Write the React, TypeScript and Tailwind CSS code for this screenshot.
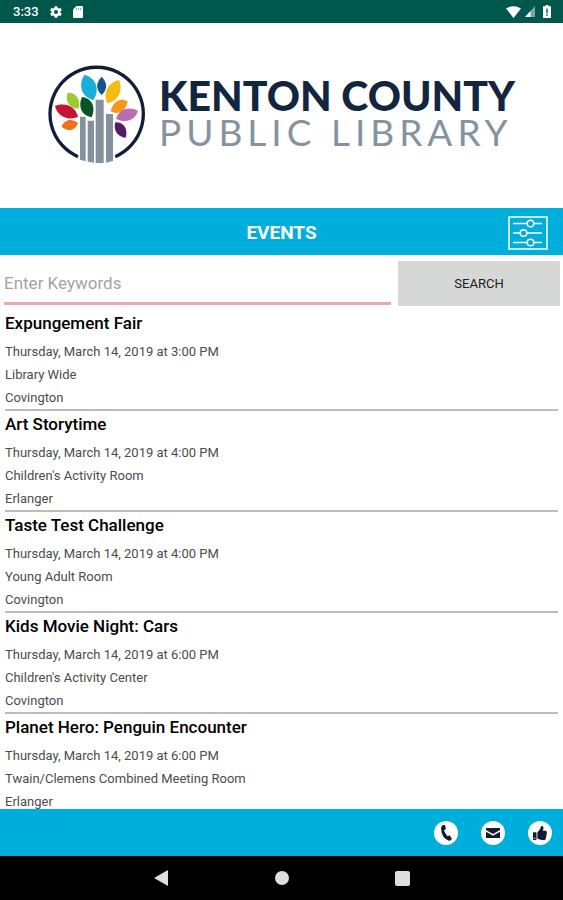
import React from "react";
import { FaThumbsUp } from "react-icons/fa";

type LibraryEvent = { title: string; when: string; room: string; branch: string };

const events: LibraryEvent[] = [
  { title: "Expungement Fair", when: "Thursday, March 14, 2019 at 3:00 PM", room: "Library Wide", branch: "Covington" },
  { title: "Art Storytime", when: "Thursday, March 14, 2019 at 4:00 PM", room: "Children's Activity Room", branch: "Erlanger" },
  { title: "Taste Test Challenge", when: "Thursday, March 14, 2019 at 4:00 PM", room: "Young Adult Room", branch: "Covington" },
  { title: "Kids Movie Night: Cars", when: "Thursday, March 14, 2019 at 6:00 PM", room: "Children's Activity Center", branch: "Covington" },
  { title: "Planet Hero: Penguin Encounter", when: "Thursday, March 14, 2019 at 6:00 PM", room: "Twain/Clemens Combined Meeting Room", branch: "Erlanger" },
];

function StatusBar() {
  return (
    <div className="flex h-[23px] shrink-0 items-center justify-between bg-[#00574b] pr-3 pl-[13px] text-white">
      <div className="flex items-center gap-[10px]">
        <span className="text-[13px] leading-4 font-medium">3:33</span>
        <svg className="h-[14px] w-[14px]" viewBox="0 0 24 24" fill="currentColor" aria-hidden="true">
          <path d="M19.4 13a7.5 7.5 0 0 0 0-2l2.1-1.7a.5.5 0 0 0 .1-.6l-2-3.500a.5.5 0 0 0-.6-.2l-2.500 1a7.300 7.300 0 0 0-1.700-1l-.4-2.600a.5.5 0 0 0-.5-.4h-4a.5.5 0 0 0-.5.4L9 5a7.300 7.300 0 0 0-1.700 1l-2.500-1a.5.5 0 0 0-.6.2l-2 3.500a.5.5 0 0 0 .1.6L4.500 11a7.500 7.500 0 0 0 0 2l-2.200 1.700a.5.5 0 0 0-.1.6l2 3.500c.1.2.4.3.6.2l2.500-1a7.300 7.300 0 0 0 1.700 1l.4 2.600c0 .2.2.4.5.4h4c.3 0 .5-.2.5-.4l.4-2.600a7.300 7.300 0 0 0 1.700-1l2.500 1c.2.1.5 0 .6-.2l2-3.500a.5.5 0 0 0-.1-.6zM12 15.500a3.500 3.500 0 1 1 0-7 3.500 3.500 0 0 1 0 7z" />
        </svg>
        <svg className="h-3 w-[10px]" viewBox="0 0 10 12" aria-hidden="true">
          <path d="M3.500 0H9q1 0 1 1v10q0 1-1 1H1q-1 0-1-1V3.500z" fill="white" />
          <path d="M3.500 2v2M5.500 2v2M7.500 2v2" stroke="#5d9189" strokeWidth=".8" />
        </svg>
      </div>
      <div className="flex items-center gap-1">
        <svg className="h-3 w-[15px]" viewBox="0 0 15 12" aria-hidden="true">
          <path d="M0 2.500Q7.500-2 15 2.500L7.500 12z" fill="white" />
        </svg>
        <svg className="h-[11px] w-[10px]" viewBox="0 0 10 11" aria-hidden="true">
          <path d="M10 0v11H0z" fill="#7aa69f" />
          <path d="M5.500 5v6H0z" fill="white" />
        </svg>
        <svg className="ml-1 h-[13px] w-2" viewBox="0 0 8 13" aria-hidden="true">
          <path d="M2.500 0h3v1.300H8V13H0V1.300h2.500z" fill="white" />
          <path d="M4 3.500v5M4 9.500v1.500" stroke="#00574b" strokeWidth="1.400" />
        </svg>
      </div>
    </div>
  );
}

function TreeLogo() {
  return (
    <svg className="h-[98px] w-[98px] shrink-0" viewBox="33 27 294 294" aria-hidden="true">
      <path d="M123 302A140 140 0 1 1 235 302" fill="none" stroke="#101e38" strokeWidth="10" />
      <g fill="#84929e">
        <path d="M129 182h17v134l-17-5zM152 194h19v126l-19-3zM176 131h24v191h-24zM207 174h21v141l-21 5z" />
      </g>
      <path d="M142 57C177 64 190 101 169 132C134 124 122 87 142 57z" fill="#1caddf" />
      <path d="M194 62Q221 90 194 117Q167 90 194 62z" fill="#17548b" />
      <path d="M246 72C259 103 245 135 211 142C197 112 212 79 246 72z" fill="#f0bd15" />
      <path d="M92 110C119 110 133 133 124 158C96 157 83 134 92 110z" fill="#9bcb32" />
      <path d="M135 123C166 127 177 154 164 184C133 179 122 151 135 123z" fill="#075526" />
      <path d="M54 150C88 138 116 153 123 183C90 195 61 180 54 150z" fill="#c41536" />
      <path d="M74 212C82 190 104 186 123 201C115 224 94 229 74 212z" fill="#ee7318" />
      <path d="M272 136C266 167 243 179 221 166C228 136 250 123 272 136z" fill="#f7961c" />
      <path d="M303 165C293 195 265 202 237 188C247 159 275 150 303 165z" fill="#bb6eaf" />
      <path d="M235 199C261 198 274 220 266 245C241 244 228 221 235 199z" fill="#551b68" />
    </svg>
  );
}

function Brand() {
  return (
    <header className="flex h-[185px] shrink-0 items-center justify-center gap-[13px] bg-white pb-[3px]">
      <TreeLogo />
      <h1 className="font-['Lato',sans-serif] whitespace-nowrap">
        <span className="block text-[41px] leading-[36px] font-black text-[#12263f]">KENTON COUNTY</span>
        <span className="block text-[37px] leading-[36px] font-normal tracking-[5px] text-[#84939f]">PUBLIC LIBRARY</span>
      </h1>
    </header>
  );
}

function FilterIcon() {
  return (
    <svg className="h-[34px] w-10" viewBox="0 0 40 34" fill="none" stroke="white" aria-hidden="true">
      <rect x="1" y="1" width="38" height="32" strokeWidth="1.500" />
      <path d="M5 7.500h14M26 7.500h8M5 17h7M19 17h15M5 26.500h14M26 26.500h8" strokeWidth="1.700" />
      <circle cx="22.500" cy="7.500" r="3.300" strokeWidth="1.500" />
      <circle cx="15.500" cy="17" r="3.300" strokeWidth="1.500" />
      <circle cx="22.500" cy="26.500" r="3.300" strokeWidth="1.500" />
    </svg>
  );
}

function EventRow({ event }: { event: LibraryEvent }) {
  return (
    <li className="mx-[5px] border-b-2 border-[#bcbcbc] text-[13px] leading-[23px] text-[#4c4c4c]">
      <h3 className="pt-px pb-[5px] text-[17px] leading-6 font-medium text-black">{event.title}</h3>
      <p>{event.when}</p>
      <p>{event.room}</p>
      <p>{event.branch}</p>
    </li>
  );
}

const roundButton = "flex h-6 w-6 items-center justify-center rounded-full bg-white text-[#101a33]";

export default function App() {
  return (
    <div className="flex h-screen flex-col overflow-hidden bg-white font-['Roboto',sans-serif]">
      <StatusBar />
      <Brand />
      <div className="grid h-[47px] shrink-0 grid-cols-[1fr_auto_1fr] items-center bg-[#00aedb] px-[15px] pt-[3px]">
        <h2 className="col-start-2 text-[19px] leading-6 font-bold text-white">EVENTS</h2>
        <button type="button" aria-label="Filter events" className="justify-self-end">
          <FilterIcon />
        </button>
      </div>
      <form className="flex h-[55px] shrink-0 gap-[7px] pt-[6px] pr-[3px] pb-1 pl-1" onSubmit={(e) => e.preventDefault()}>
        <input
          type="text"
          aria-label="Enter Keywords"
          placeholder="Enter Keywords"
          className="mb-px min-w-0 flex-1 border-b-[3px] border-[#e9a9b2] pt-[2px] text-[17px] leading-6 outline-none placeholder:text-[#a3a3a3]"
        />
        <button type="submit" className="w-[162px] bg-[#d6d7d7] text-[13px] leading-4 text-[#202020]">
          SEARCH
        </button>
      </form>
      <ul className="min-h-0 flex-1 overflow-hidden">
        {events.map((event) => (
          <EventRow key={event.title} event={event} />
        ))}
      </ul>
      <div className="flex h-[47px] shrink-0 items-center justify-end gap-[23px] bg-[#00aedb] pr-[11px]">
        <button type="button" aria-label="Call" className={roundButton}>
          <svg className="h-[18px] w-[14px]" viewBox="0 0 14 18" aria-hidden="true">
            <path d="M3 1.500L5.800.8 7 5 5 6.300Q6 9.800 8.500 12.200L10.700 11.300 13 15 10.500 17Q2.500 14.500 2 4z" fill="currentColor" />
          </svg>
        </button>
        <button type="button" aria-label="Email" className={roundButton}>
          <svg className="h-[10px] w-[14px]" viewBox="0 0 14 10" fill="currentColor" aria-hidden="true">
            <path d="M0 0h14v2L7 6 0 2zM0 3.800l7 4 7-4V10H0z" />
          </svg>
        </button>
        <button type="button" aria-label="Like" className={roundButton}>
          <FaThumbsUp className="h-[14px] w-[14px]" />
        </button>
      </div>
      <nav className="flex h-11 shrink-0 items-center justify-center gap-[106px] bg-black text-[#dedede]">
        <button type="button" aria-label="Back" className="flex w-[15px] justify-center">
          <svg className="h-4 w-[14px]" viewBox="0 0 14 16" fill="currentColor" aria-hidden="true">
            <path d="M0 8L14 0v16z" />
          </svg>
        </button>
        <button type="button" aria-label="Home" className="h-[14px] w-[14px] rounded-full bg-[#dedede]" />
        <button type="button" aria-label="Recent apps" className="h-[15px] w-[15px] rounded-[2px] bg-[#dedede]" />
      </nav>
    </div>
  );
}
